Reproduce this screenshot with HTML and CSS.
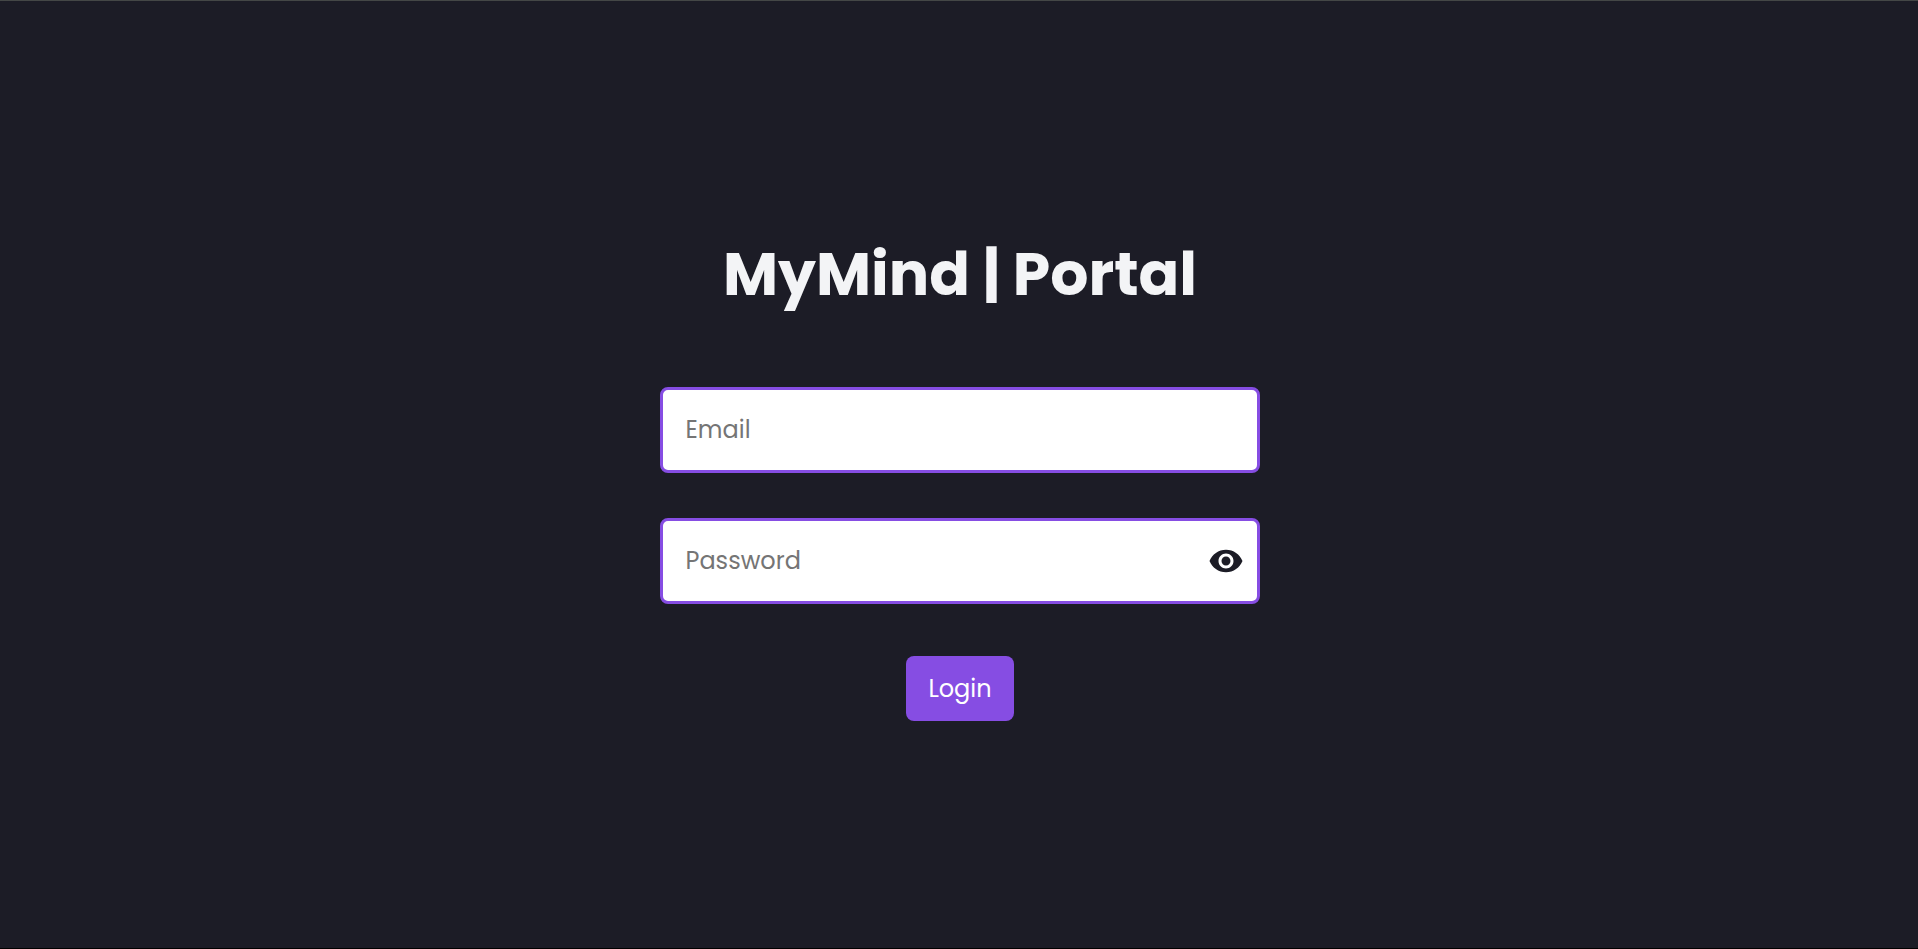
FILE: index.html
```html
<!DOCTYPE html>
<html lang="en">
<head>
<meta charset="utf-8">
<title>MyMind | Portal</title>
<link rel="stylesheet" href="styles.css">
</head>
<body>
<main class="page">
  <h1 class="title">MyMind | Portal</h1>
  <form class="form">
    <div class="field"><input class="input input-email" type="email" placeholder="Email" aria-label="Email"></div>
    <div class="field">
      <input class="input input-password" type="password" placeholder="Password" aria-label="Password">
      <svg class="eye" viewBox="0 0 24 24" aria-hidden="true"><path d="M12 4.5C7 4.5 2.73 7.61 1 12c1.73 4.39 6 7.5 11 7.5s9.27-3.11 11-7.5c-1.73-4.39-6-7.5-11-7.5zM12 17c-2.76 0-5-2.24-5-5s2.240-5 5-5 5 2.240 5 5-2.240 5-5 5zm0-8c-1.660 0-3 1.340-3 3s1.340 3 3 3 3-1.340 3-3-1.340-3-3-3z"/></svg>
    </div>
    <button class="login" type="button">Login</button>
  </form>
</main>
</body>
</html>
```
FILE: styles.css
```css
* { box-sizing: border-box; }
body {
  margin: 0;
  background: #1c1c26;
  font-family: Poppins, Inter, "Liberation Sans", sans-serif;
}
.page {
  display: flex;
  flex-direction: column;
  align-items: center;
  height: 100vh;
  padding-top: 228px;
  padding-left: 2px;
  border-top: 1px solid #444746;
  border-bottom: 1px solid #000;
}
.title {
  margin: 0 0 68px;
  color: #f3f4f6;
  font-size: 60px;
  line-height: 90px;
  font-weight: 700;
  white-space: nowrap;
}
.form {
  display: flex;
  flex-direction: column;
  align-items: center;
}
.field {
  position: relative;
  width: 600px;
  height: 86px;
  margin-bottom: 45px;
}
.input {
  display: block;
  width: 100%;
  height: 100%;
  padding: 0 22.5px 2px;
  border: 3px solid #864de3;
  border-radius: 8px;
  background: #fff;
  color: #1c1c26;
  font: inherit;
  font-size: 24px;
  outline: none;
}
.input::placeholder { color: #757575; }
.eye {
  position: absolute;
  top: 24.5px;
  right: 16px;
  width: 36px;
  height: 36px;
  fill: #1c1c26;
}
.login {
  width: 108px;
  height: 65px;
  margin-top: 7px;
  padding: 0;
  border: 0;
  border-radius: 8px;
  background: #864de3;
  color: #fff;
  font: inherit;
  font-size: 24px;
}
```
